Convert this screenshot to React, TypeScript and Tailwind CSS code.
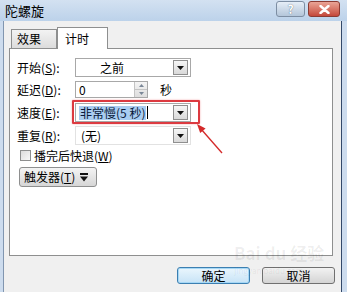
import React from 'react';

function DropBtn() {
  return (
    <div className="flex h-[15px] w-[15px] items-center justify-center border border-[#8f8f8f] bg-linear-to-b from-[#f6f6f6] to-[#d9d9d9]">
      <svg width="7" height="4" viewBox="0 0 7 4">
        <path d="M0 0h7L3.5 4z" fill="#111" />
      </svg>
    </div>
  );
}

function Label({ text, k }: { text: string; k: string }) {
  return (
    <div className="w-[58px] shrink-0 text-[12px] text-black">
      {text}(<span className="underline">{k}</span>):
    </div>
  );
}

export default function App() {
  return (
    <div className="relative flex h-[292px] w-[347px] flex-col overflow-hidden bg-[#c7d9ed] font-['Noto_Sans_CJK_SC','Liberation_Sans',sans-serif] leading-none">
      {/* title bar */}
      <div className="flex h-[21px] shrink-0 items-center bg-linear-to-b from-[#d3e1f1] to-[#bcd2ea] pl-[5px]">
        <span className="text-[13px] text-black">陀螺旋</span>
        <div className="ml-auto flex h-full items-start pt-[1px] pr-[7px]">
          <div className="flex h-[16px] w-[29px] items-center justify-center rounded-[3px] border border-[#7d8ea3] bg-linear-to-b from-[#e6eef7] to-[#b4c6da] text-[12px] font-bold text-white [text-shadow:0_0_1px_#3a4a5e]">
            ?
          </div>
          <div className="ml-[3px] flex h-[16px] w-[32px] items-center justify-center rounded-[3px] border border-[#8b3b33] bg-linear-to-b from-[#e9a496] to-[#c4473a]">
            <svg width="11" height="9" viewBox="0 0 11 9">
              <path d="M1.5 1l8 7M9.5 1l-8 7" stroke="#fff" strokeWidth="2.4" strokeLinecap="round" />
            </svg>
          </div>
        </div>
      </div>

      <div className="flex flex-1">
        {/* left frame */}
        <div className="w-[4px] shrink-0 border-r border-[#8196b0] bg-[#cddcee]" />

        {/* content */}
        <div className="flex w-[337px] flex-col bg-[#f0f0f0] pl-[5px] pt-[6px]">
          {/* tabs */}
          <div className="flex h-[21px] items-end pl-[2px]">
            <div className="flex h-[19px] w-[46px] items-center border border-b-0 border-[#8e8f8f] bg-linear-to-b from-[#f3f3f3] to-[#dcdcdc] pl-[5px] text-[12px] text-black">
              效果
            </div>
            <div className="relative z-10 -mb-[1px] flex h-[22px] w-[51px] items-center border border-b-0 border-[#8e8f8f] bg-white pl-[7px] text-[12px] text-black">
              计时
            </div>
          </div>

          {/* panel */}
          <div className="flex h-[208px] w-[324px] flex-col border border-[#8e8f8f] bg-white pl-[7px] pt-[9px]">
            <div className="flex h-[19px] items-center">
              <Label text="开始" k="S" />
              <div className="flex h-[19px] w-[116px] items-center border border-[#a8a8a8] bg-white pr-[2px]">
                <span className="flex-1 pl-[24px] text-[12px] text-black">之前</span>
                <DropBtn />
              </div>
            </div>

            <div className="mt-[4px] flex h-[17px] items-center">
              <Label text="延迟" k="D" />
              <div className="flex h-[17px] w-[73px] items-center border border-[#a8a8a8] bg-white">
                <span className="flex-1 pl-[3px] text-[12px] text-black">0</span>
                <div className="flex h-full w-[13px] flex-col border-l border-[#c4c4c4] bg-linear-to-b from-[#f4f4f4] to-[#dedede]">
                  <div className="flex flex-1 items-center justify-center border-b border-[#c4c4c4]">
                    <svg width="5" height="3" viewBox="0 0 5 3"><path d="M0 3h5L2.5 0z" fill="#7a8797" /></svg>
                  </div>
                  <div className="flex flex-1 items-center justify-center">
                    <svg width="5" height="3" viewBox="0 0 5 3"><path d="M0 0h5L2.5 3z" fill="#7a8797" /></svg>
                  </div>
                </div>
              </div>
              <span className="ml-[12px] text-[12px] text-black">秒</span>
            </div>

            <div className="mt-[5px] flex h-[19px] items-center">
              <Label text="速度" k="E" />
              <div className="flex h-[19px] w-[116px] items-center border border-[#a8a8a8] bg-white pr-[2px]">
                <div className="flex flex-1 items-center pl-[3px]">
                  <span className="bg-[#a9cdf1] px-[1px] py-[1px] text-[12px] text-[#0a1a3a]">非常慢(5 秒)</span>
                  <span className="ml-[1px] h-[13px] w-[1px] bg-black" />
                </div>
                <DropBtn />
              </div>
            </div>

            <div className="mt-[4px] flex h-[19px] items-center">
              <Label text="重复" k="R" />
              <div className="flex h-[19px] w-[116px] items-center border border-[#e2e2e2] bg-white pr-[2px]">
                <span className="flex-1 pl-[5px] text-[12px] text-black">(无)</span>
                <DropBtn />
              </div>
            </div>

            <div className="mt-[4px] flex h-[13px] items-center pl-[3px]">
              <div className="h-[11px] w-[11px] border border-[#8e8f8f] bg-linear-to-br from-[#dcdcdc] to-[#f8f8f8]" />
              <span className="ml-[3px] text-[12px] text-black">
                播完后快退(<span className="underline">W</span>)
              </span>
            </div>

            <div className="mt-[5px] flex">
              <div className="ml-[2px] flex h-[20px] w-[78px] items-center rounded-[3px] border border-[#8e8f8f] bg-linear-to-b from-[#f4f4f4] to-[#d6d6d6] pl-[4px] text-[12px] text-black">
                触发器(<span className="underline">T</span>)
                <svg className="ml-[5px]" width="8" height="9" viewBox="0 0 8 9">
                  <path d="M0 0h8v2H0z" fill="#111" />
                  <path d="M0 3.5h8L4 8.5z" fill="#111" />
                </svg>
              </div>
            </div>
          </div>

          {/* footer buttons */}
          <div className="mt-[11px] flex justify-end gap-[12px] pr-[6px]">
            <div className="flex h-[17px] w-[73px] items-center justify-center rounded-[3px] border border-[#3c7fb1] bg-linear-to-b from-[#eaf6fd] to-[#c7e3f6] text-[12px] text-black shadow-[inset_0_0_0_1px_#a6d8f6]">
              确定
            </div>
            <div className="flex h-[17px] w-[73px] items-center justify-center rounded-[3px] border border-[#707070] bg-linear-to-b from-[#f2f2f2] to-[#d4d4d4] text-[12px] text-black">
              取消
            </div>
          </div>
        </div>

        {/* right frame */}
        <div className="w-[6px] shrink-0 border-l border-[#33496a] bg-[#cddcee]" />
      </div>

      {/* annotation: red highlight box */}
      <div className="pointer-events-none absolute left-[72px] top-[100px] h-[24px] w-[128px] rounded-[1px] border-2 border-[#dc3a40] shadow-[0_0_2px_#f3a0a4]" />

      {/* annotation: arrow */}
      <svg className="pointer-events-none absolute left-0 top-0" width="347" height="292" viewBox="0 0 347 292">
        <line x1="222" y1="153" x2="201" y2="129" stroke="#d42a2a" strokeWidth="1.3" />
        <polygon points="197,124 205.6,128.5 200.2,133.1" fill="#d42a2a" />
      </svg>

      {/* watermark */}
      <div className="pointer-events-none absolute left-[234px] top-[244px] flex flex-col items-start text-black/[0.07]">
        <span className="text-[17px] font-bold leading-none">Bai du 经验</span>
        <span className="mt-[6px] text-[8px] leading-none">jingyan.baidu.com</span>
      </div>
    </div>
  );
}
